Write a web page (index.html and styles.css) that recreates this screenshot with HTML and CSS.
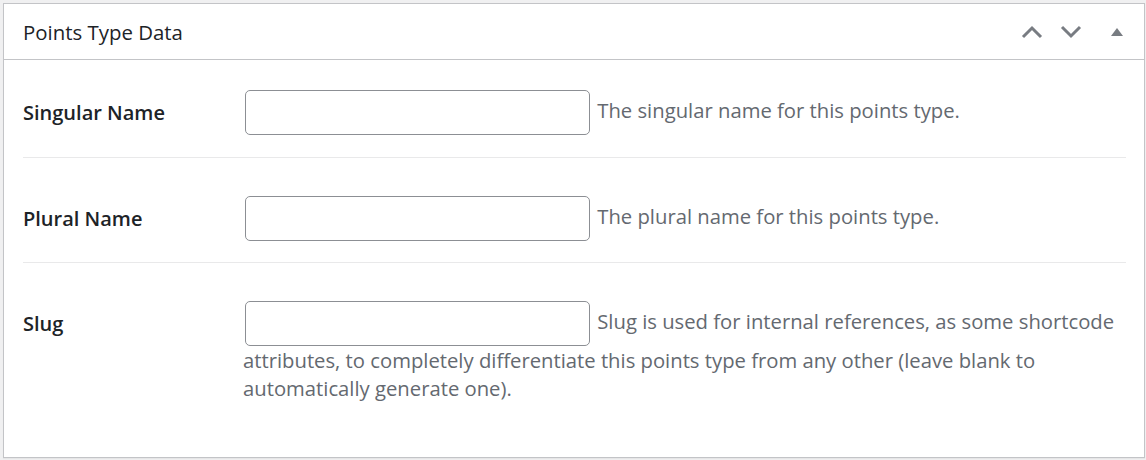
FILE: index.html
```html
<!DOCTYPE html>
<html lang="en">
<head>
<meta charset="utf-8">
<title>Points Type Data</title>
<link rel="stylesheet" href="styles.css">
</head>
<body>
<div class="postbox">
  <div class="postbox-header">
    <h2 class="hndle">Points Type Data</h2>
    <div class="handle-actions">
      <button class="handle-btn" aria-label="Move up">
        <svg width="22" height="14" viewBox="0 0 22 14"><polyline points="2,12 11,3 20,12" fill="none" stroke="#787c82" stroke-width="3"/></svg>
      </button>
      <button class="handle-btn" aria-label="Move down">
        <svg width="22" height="14" viewBox="0 0 22 14"><polyline points="2,2 11,11 20,2" fill="none" stroke="#787c82" stroke-width="3"/></svg>
      </button>
      <button class="handle-btn toggle" aria-label="Toggle panel">
        <svg width="14" height="10" viewBox="0 0 14 10"><polygon points="1,9 7,1 13,9" fill="#787c82"/></svg>
      </button>
    </div>
  </div>
  <div class="inside">
    <div class="row first">
      <label class="label" for="singular">Singular Name</label>
      <div class="field"><input id="singular" class="text" type="text"> <span class="description">The singular name for this points type.</span></div>
    </div>
    <div class="row">
      <label class="label" for="plural">Plural Name</label>
      <div class="field"><input id="plural" class="text" type="text"> <span class="description">The plural name for this points type.</span></div>
    </div>
    <div class="row last">
      <label class="label" for="slug">Slug</label>
      <div class="field"><input id="slug" class="text" type="text"> <span class="description">Slug is used for internal references, as some shortcode attributes, to completely differentiate this points type from any other (leave blank to automatically generate one).</span></div>
    </div>
  </div>
</div>
</body>
</html>
```

FILE: styles.css
```css
html, body {
  margin: 0;
  padding: 0;
  background: #f0f0f1;
}
body {
  padding: 3px 1px 2px 3px;
  font-family: "Open Sans", "Noto Sans", sans-serif;
  color: #1d2327;
}
.postbox {
  width: 1140px;
  height: 453px;
  background: #fff;
  border: 1px solid #c3c4c7;
  box-shadow: 0 1px 1px rgba(0,0,0,0.04);
}
.postbox-header {
  display: flex;
  align-items: center;
  justify-content: space-between;
  height: 55px;
  border-bottom: 1px solid #c3c4c7;
}
.hndle {
  margin: 0;
  padding: 0 0 0 19px;
  font-size: 20.4px;
  font-weight: 500;
  color: #1d2327;
}
.handle-actions {
  display: flex;
  align-items: center;
  padding-right: 20px;
}
.handle-btn {
  display: flex;
  align-items: center;
  justify-content: center;
  border: 0;
  background: none;
  padding: 0;
  width: 22px;
  height: 20px;
  margin-left: 17px;
}
.handle-btn.toggle {
  width: 14px;
  margin-left: 28px;
}
.inside {
  padding: 0 18px 0 19px;
}
.row {
  display: grid;
  grid-template-columns: 220px 1fr;
  padding: 38px 0 21px;
  border-bottom: 1px solid #e9e9ea;
}
.row.first {
  padding-top: 30px;
  padding-bottom: 22px;
}
.row.last {
  border-bottom: 0;
}
.label {
  font-size: 20px;
  font-weight: 600;
  line-height: 45px;
  color: #1d2327;
}
.field {
  font-size: 20.25px;
  line-height: 28px;
  color: #646970;
}
.text {
  box-sizing: border-box;
  width: 345px;
  height: 45px;
  margin: 0 2px;
  padding: 0 10px;
  border: 1px solid #8c8f94;
  border-radius: 5px;
  background: #fff;
  vertical-align: middle;
  font: inherit;
}
.description {
  color: #646970;
}
```
